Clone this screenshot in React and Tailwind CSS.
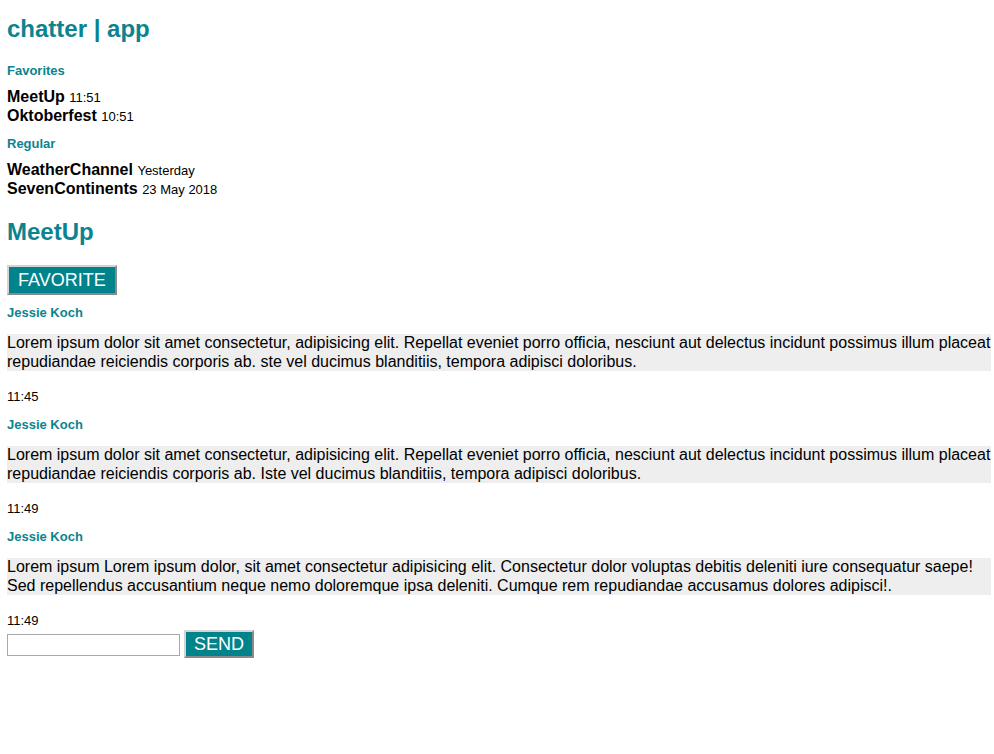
export default function App() {
  const teal = "text-[#0b8390]";
  const messages = [
    {
      name: "Jessie Koch",
      text: "Lorem ipsum dolor sit amet consectetur, adipisicing elit. Repellat eveniet porro officia, nesciunt aut delectus incidunt possimus illum placeat repudiandae reiciendis corporis ab. ste vel ducimus blanditiis, tempora adipisci doloribus.",
      time: "11:45",
    },
    {
      name: "Jessie Koch",
      text: "Lorem ipsum dolor sit amet consectetur, adipisicing elit. Repellat eveniet porro officia, nesciunt aut delectus incidunt possimus illum placeat repudiandae reiciendis corporis ab. Iste vel ducimus blanditiis, tempora adipisci doloribus.",
      time: "11:49",
    },
    {
      name: "Jessie Koch",
      text: "Lorem ipsum Lorem ipsum dolor, sit amet consectetur adipisicing elit. Consectetur dolor voluptas debitis deleniti iure consequatur saepe! Sed repellendus accusantium neque nemo doloremque ipsa deleniti. Cumque rem repudiandae accusamus dolores adipisci!.",
      time: "11:49",
    },
  ];
  return (
    <div className="min-h-[754px] bg-white pl-[7px] pr-[3px] pt-[15px] font-['Liberation_Sans',Arial,sans-serif] text-black">
      <h1 className={`text-[24px] font-bold leading-[28px] ${teal}`}>chatter | app</h1>

      <div className={`mt-[20px] text-[13px] font-bold leading-[15px] ${teal}`}>Favorites</div>
      <div className="mt-[10px]">
        <div className="text-[16px] leading-[18px]">
          <span className="font-bold">MeetUp</span> <span className="text-[13px]">11:51</span>
        </div>
        <div className="text-[16px] leading-[18px]">
          <span className="font-bold">Oktoberfest</span> <span className="text-[13px]">10:51</span>
        </div>
      </div>

      <div className={`mt-[10px] text-[13px] font-bold leading-[15px] ${teal}`}>Regular</div>
      <div className="mt-[10px]">
        <div className="text-[16px] leading-[18px]">
          <span className="font-bold">WeatherChannel</span> <span className="text-[13px]">Yesterday</span>
        </div>
        <div className="text-[16px] leading-[18px]">
          <span className="font-bold">SevenContinents</span> <span className="text-[13px]">23 May 2018</span>
        </div>
      </div>

      <h2 className={`mt-[19px] text-[24px] font-bold leading-[28px] ${teal}`}>MeetUp</h2>

      <button className="mt-[19px] flex h-[30px] items-center border-2 border-t-[#d4d4d4] border-l-[#d4d4d4] border-r-[#8a8a8a] border-b-[#8a8a8a] bg-[#00838a] px-[9px] text-[18px] leading-[20px] text-white">
        FAVORITE
      </button>

      <div className="mt-[10px] flex flex-col gap-[13px]">
        {messages.map((m, i) => (
          <div key={i}>
            <div className={`text-[13px] font-bold leading-[15px] ${teal}`}>{m.name}</div>
            <p className="mt-[14px] bg-[#eeeeee] text-[16px] leading-[18.5px]">{m.text}</p>
            <div className="mt-[18px] text-[13px] leading-[15px]">{m.time}</div>
          </div>
        ))}
      </div>

      <div className="mt-[2px] flex items-start gap-[4px]">
        <input type="text" className="mt-[4px] h-[22px] w-[173px] border border-[#a9a9a9] bg-white px-1 text-[13px] outline-none" />
        <button className="flex h-[28px] items-center border-2 border-t-[#d4d4d4] border-l-[#d4d4d4] border-r-[#8a8a8a] border-b-[#8a8a8a] bg-[#00838a] px-[8px] text-[18px] leading-[20px] text-white">
          SEND
        </button>
      </div>
    </div>
  );
}
